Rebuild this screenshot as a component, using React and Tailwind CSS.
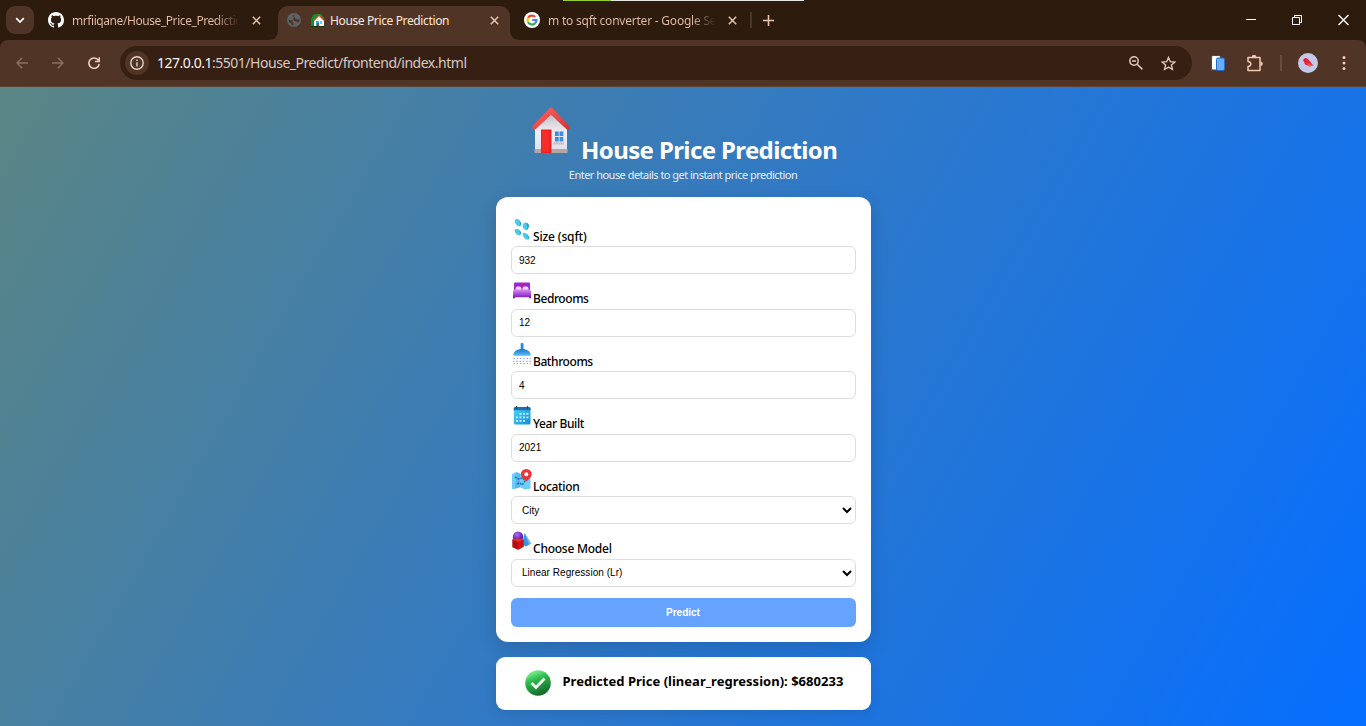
import React from "react";

const SEGOE = "font-['Noto_Sans','Open_Sans',sans-serif]";

function Close() {
  return (
    <svg className="h-[9px] w-[9px] shrink-0" viewBox="0 0 9 9" fill="none" stroke="#e9c3ae" strokeWidth="1.5">
      <path d="M.8.8l7.4 7.4M8.2.8L.8 8.2" />
    </svg>
  );
}

function TabStrip() {
  return (
    <div className="flex h-[40px] items-start bg-[#2d1b0e]">
      <div className="ml-[6px] mt-[6px] flex h-7 w-7 items-center justify-center rounded-[9px] bg-[#503526]">
        <svg className="h-3 w-3" viewBox="0 0 12 12" fill="none" stroke="#fff" strokeWidth="1.7"><path d="M2.2 4.2L6 8l3.8-3.8" /></svg>
      </div>
      <div className="flex h-10 w-[234px] items-center pl-[14px]">
        <svg className="h-4 w-4 shrink-0" viewBox="0 0 16 16" fill="#fff">
          <path d="M8 0C3.58 0 0 3.58 0 8c0 3.54 2.29 6.53 5.47 7.59.4.07.55-.17.55-.38 0-.19-.01-.82-.01-1.49-2.01.37-2.53-.49-2.69-.94-.09-.23-.48-.94-.82-1.13-.28-.15-.68-.52-.01-.53.63-.01 1.08.58 1.23.82.72 1.21 1.87.87 2.33.66.07-.52.28-.87.51-1.07-1.78-.2-3.64-.89-3.64-3.95 0-.87.31-1.59.82-2.15-.08-.2-.36-1.02.08-2.12 0 0 .67-.21 2.2.82.64-.18 1.32-.27 2-.27s1.36.09 2 .27c1.53-1.04 2.2-.82 2.2-.82.44 1.1.16 1.92.08 2.12.51.56.82 1.27.82 2.15 0 3.07-1.87 3.75-3.65 3.95.29.25.54.73.54 1.48 0 1.07-.01 1.93-.01 2.2 0 .21.15.46.55.38A8.01 8.01 0 0 0 16 8c0-4.42-3.58-8-8-8z" />
        </svg>
        <div className="ml-2 mt-px w-[168px] whitespace-nowrap bg-linear-to-r from-[#e5bfaa] from-85% to-transparent bg-clip-text text-[12px] tracking-[-0.43px] text-transparent">mrfiiqane/House_Price_Predictio</div>
        <div className="ml-[12px]"><Close /></div>
      </div>
      <svg className="h-[34px] w-[10px] shrink-0 self-end" viewBox="0 0 10 34" fill="#503526"><path d="M10 24v10H0Q10 34 10 24z" /></svg>
      <div className="mt-[6px] flex h-[34px] w-[232px] items-center rounded-t-[10px] bg-[#503526] pb-[6px] pl-[9px]">
        <svg className="h-[14px] w-[14px] shrink-0" viewBox="0 0 14 14"><circle cx="7" cy="7" r="7" fill="#5f6368" /><path d="M7.800 1.600Q5.300 2 5.800 3.800L8 4.200l.3 1.600 2.400.7 1.700-.9q.4 2.500-.9 4.200L9.800 8.600 8 8.400 6.700 7H2.500L1.600 5.800q-.4 2.600 1 4.300l1.600.2.400 1.500 2 .9.100-2.500L5.200 8.700z" fill="#503526" /></svg>
        <svg className="ml-[10px] h-[14px] w-[14px] shrink-0" viewBox="0 0 14 14"><path d="M0 13V6l2-4 3-1h5l3 4v8z" fill="#07952b" /><path d="M3 13V7l5-5 5 5v6z" fill="#f7f5ef" /><path d="M2.7 7.5L8 2l5.500 5.500" fill="none" stroke="#cd4526" strokeWidth="1.500" /><path d="M5 8h3v5H5z" fill="#23b7df" /><path d="M9 8h2v3H9z" fill="#49d6ff" /><path d="M6 10h2v3H6z" fill="#db2119" /><path d="M0 13h14v1H0z" fill="#183413" /></svg>
        <div className="ml-[5px] mt-px w-[154px] whitespace-nowrap text-[12px] tracking-[-0.37px] text-[#fbe7dd]">House Price Prediction</div>
        <div className="ml-[6px]"><Close /></div>
      </div>
      <svg className="h-[34px] w-[10px] shrink-0 self-end" viewBox="0 0 10 34" fill="#503526"><path d="M0 24Q0 34 10 34H0z" /></svg>
      <div className="flex h-10 items-center pl-[4px]">
        <svg className="h-4 w-4 shrink-0" viewBox="0 0 16 16" fill="none" strokeWidth="2.200"><circle cx="8" cy="8" r="8" fill="#fff" /><path d="M4.100 5.800A4.500 4.500 0 0 1 11.200 4.900" stroke="#ea4335" /><path d="M4.100 5.800a4.500 4.500 0 0 0 0 4.400" stroke="#fbbc04" /><path d="M4.100 10.200a4.500 4.500 0 0 0 6.900 1.200" stroke="#34a853" /><path d="M8.200 8h4.300a4.500 4.500 0 0 1-1.500 3.400" stroke="#4285f4" /></svg>
        <div className="ml-2 mt-px w-[168px] whitespace-nowrap bg-linear-to-r from-[#e5bfaa] from-85% to-transparent bg-clip-text text-[12px] tracking-[-0.22px] text-transparent">m to sqft converter - Google Se</div>
        <div className="ml-[12px]"><Close /></div>
        <div className="ml-[13px] h-4 w-[2px] bg-[#503526]" />
        <svg className="ml-[11px] h-[11px] w-[11px]" viewBox="0 0 11 11" stroke="#e9c3ae" strokeWidth="1.600"><path d="M5.500 0v11M0 5.500h11" /></svg>
      </div>
      <svg className="ml-auto mr-[17px] mt-[14px] h-3 w-[104px]" viewBox="0 0 104 12" fill="none" stroke="#fff"><path d="M1 5.500h10M47.500 3.500h7v7h-7zM49.500 3V1.500h7v7H55" /><path d="M93.500 1l10 10M103.500 1l-10 10" strokeWidth="1.300" /></svg>
    </div>
  );
}

function Toolbar() {
  return (
    <div className="bg-[#2d1b0e]">
      <div className="flex h-[47px] items-center rounded-t-[8px] border-b border-[#5c4437] bg-[#503526]">
        <svg className="ml-[16px] h-3 w-12 shrink-0" viewBox="0 0 48 12" fill="none" stroke="#8c6d5d" strokeWidth="1.500"><path d="M12 6H1M6.200.7L1 6l5.200 5.300M36 6h11M41.800.7L47 6l-5.200 5.300" /></svg>
        <svg className="ml-[24px] h-3 w-3 shrink-0" viewBox="0 0 12 12" fill="none" stroke="#f0cbb7" strokeWidth="1.600"><path d="M10.400 3.300A5.200 5.200 0 1 0 11.200 7M11.300.2v4.300H7" /></svg>
        <div className="ml-[20px] flex h-[34px] w-[1072px] items-center rounded-full bg-[#362014] pl-[5px]">
          <div className="flex h-6 w-6 shrink-0 items-center justify-center rounded-full bg-[#503526]">
            <svg className="h-[14px] w-[14px]" viewBox="0 0 14 14" fill="none" stroke="#e6d3ca" strokeWidth="1.400"><circle cx="7" cy="7" r="6.200" /><path d="M7 6.200v4.300M7 3.400v1.500" /></svg>
          </div>
          <div className="mb-px ml-2 whitespace-nowrap text-[14px] tracking-[-0.48px] text-[#d8c8c0]"><span className="text-[#fff4ee]">127.0.0.1</span>:5501/House_Predict/frontend/index.html</div>
          <svg className="ml-auto h-[14px] w-[14px]" viewBox="0 0 14 14" fill="none" stroke="#dcc8be" strokeWidth="1.500"><circle cx="5" cy="5" r="4.200" /><path d="M8.200 8.200l5.200 5.200M3 5h4" /></svg>
          <svg className="ml-[18px] mr-[16px] h-[15px] w-[15px]" viewBox="0 0 15 15" fill="none" stroke="#dcc8be" strokeWidth="1.300"><path d="M7.500 1.400l1.800 4.200 4.600.4-3.500 3 1.100 4.500-4-2.400-4 2.400L4.600 9 1.100 6l4.600-.4z" /></svg>
        </div>
        <svg className="ml-[19px] h-4 w-[14px]" viewBox="0 0 14 16"><rect x=".5" y=".5" width="9" height="14.500" rx="1.500" fill="#fff" stroke="#2e4e75" /><rect x="5.500" y="3" width="8" height="12.500" rx="1.500" fill="#68adfd" stroke="#266cc0" /></svg>
        <svg className="ml-[21px] h-[17px] w-[17px]" viewBox="0 0 17 17" fill="none" stroke="#efc8b4" strokeWidth="1.500" strokeLinejoin="round"><path d="M2 2.500h12v13H2v-3.900q2.800-.3 2.800-2.600T2 6.400z" /><path d="M6.500 2a1.500 1.500 0 0 1 3 0M14.500 7.300a1.500 1.500 0 0 1 0 3" fill="#efc8b4" /></svg>
        <div className="ml-[17px] h-4 w-[2px] bg-[#6b4c3c]" />
        <svg className="ml-[16px] h-5 w-5" viewBox="0 0 20 20"><circle cx="10" cy="10" r="10" fill="#c4c9e8" /><path d="M5 7l2-2 2 .2 3 3 2.300 3.200 1.700.8-3 .4-1.200 1.200-1.300-1.100-3.200-1L6 9z" fill="#df2639" /><path d="M9 9.500l4.300 2.300 2.500.8-2.800.3-2 1z" fill="#fa5b3e" /></svg>
        <svg className="ml-[24px] h-4 w-1" viewBox="0 0 4 16" fill="#f0cbb7"><circle cx="2" cy="2.500" r="1.500" /><circle cx="2" cy="8" r="1.500" /><circle cx="2" cy="13.500" r="1.500" /></svg>
      </div>
    </div>
  );
}

const steps = (
  <svg className="h-[22px] w-[22px]" viewBox="0 0 22 22" fill="#4ac9ed">
    <path d="M3.600 2.500Q5.300.2 7.800 1.600l2.400 3.600-1 3.400-2.800-.5Q3.600 5.500 3.600 2.500z" />
    <path d="M11.600 8.500q.2-4 3.400-3.900 3.200.7 2.900 4.400l-2.100 3.200-3-.9zM3.600 12q2-2.400 4.400-.5l2.200 3-1.300 3-2.700-.6Q3.600 14.800 3.600 12zM11.500 15.500q1.900-1.800 4.200.3l2.500 3.100-1.100 2.900-2.800-.6q-2.500-2.500-2.800-5.700z" />
    <path d="M15.500 4.900q2.700.9 2.400 4.100l-2.100 3.200q1.200-3.700-.3-7.300zM15.700 15.800l2.500 3.100-1.100 2.900q-.1-3.200-1.400-6zM8.200 2l2 3.200-1 3.400q.2-3.500-1-6.600zM8.200 11.700l2 2.800-1.300 3q.3-3-.7-5.800z" fill="#269bbf" />
  </svg>
);

const bed = (
  <svg className="h-[22px] w-[22px]" viewBox="0 0 22 22">
    <defs><linearGradient id="bedg" x1="0" y1="0" x2="0" y2="1"><stop stopColor="#db8cf5" /><stop offset="1" stopColor="#7912bb" /></linearGradient></defs>
    <path d="M3 3.500q0-1 1-1h14q1 0 1 1V12H3z" fill="#9b27cf" /><path d="M9.500 4l1.500-.8L12.500 4 11 5.600z" fill="#d91c5b" />
    <rect x="4.500" y="6.500" width="6" height="4.500" rx="2" fill="#f0d8fb" /><rect x="11.500" y="6.500" width="6" height="4.500" rx="2" fill="#f0d8fb" />
    <path d="M2 11q1-2 3-1.500h12q2-.5 3 1.500v7.200h-2V17.300H4v.9H2z" fill="url(#bedg)" />
  </svg>
);

const shower = (
  <svg className="h-[22px] w-[22px]" viewBox="0 0 22 22">
    <defs><linearGradient id="shg" x1="0" y1="0" x2="0" y2="1"><stop stopColor="#1571c5" /><stop offset="1" stopColor="#5bc0f8" /></linearGradient></defs>
    <rect x="9.700" y="0" width="2.800" height="6.500" rx="1" fill="#1e8edb" /><path d="M2.300 11.500q1-4.500 6-5.300l2.700-.7 2.700.7q5 .8 6 5.300 0 1.300-1 1.300H3.300q-1 0-1-1.300z" fill="url(#shg)" />
    <path d="M2.500 15.500h17.500M2 18.300h18M2.500 20.500h17" stroke="#86a0dc" strokeWidth="1.200" strokeDasharray="1.300 2" />
  </svg>
);

const calendar = (
  <svg className="h-[22px] w-[22px]" viewBox="0 0 22 22">
    <defs><linearGradient id="calg" x1="0" y1="0" x2="1" y2="1"><stop stopColor="#48dcfd" /><stop offset="1" stopColor="#1688d3" /></linearGradient></defs>
    <rect x="2.800" y="2" width="16.700" height="17.500" rx="1.500" fill="url(#calg)" /><path d="M2.800 5.300V3.500Q2.800 2 4.300 2H18q1.500 0 1.500 1.500v1.800z" fill="#1b6ead" /><path d="M5.500 1v3M16.500 1v3" stroke="#145486" strokeWidth="1.300" />
    <path d="M8.500 8.800h9M5 12.300h12.500M5 15.800h9" stroke="#c9f3fc" strokeWidth="1.800" strokeDasharray="2 1.500" />
  </svg>
);

const map = (
  <svg className="h-[22px] w-[22px]" viewBox="0 0 22 22">
    <path d="M1 6l4.500-2L11 6.500l8.500-2v16L14 21.500l-5-2.200-7 2q-1 0-1-1z" fill="#71cdf8" /><path d="M5.500 4L9 6v13.300l-5.500 1.500L5 12z" fill="#48a9e6" opacity=".6" /><path d="M4 9l3 2 5-1 2 3-3 4-2-2-4 1" fill="none" stroke="#2474bb" strokeWidth="1.600" strokeDasharray="2 1" />
    <path d="M15.500 13.500Q9.800 9 9.800 6.300a5.500 5.300 0 0 1 11 0Q20.800 9 15.500 13.500z" fill="#ee3439" /><circle cx="15.300" cy="6.300" r="2" fill="#fff" />
  </svg>
);

const model = (
  <svg className="h-[22px] w-[22px]" viewBox="0 0 22 22">
    <defs><radialGradient id="sph" cx=".4" cy=".3"><stop stopColor="#b06cf5" /><stop offset="1" stopColor="#6422b8" /></radialGradient></defs>
    <path d="M13.500 3L20 13.500l-5 3-4-2z" fill="#3399df" /><path d="M13.500 3L20 13.500l-2 1z" fill="#64bdea" /><circle cx="7" cy="6.700" r="5.200" fill="url(#sph)" />
    <path d="M1.300 9.500L7 8.300l5.500 1.400v7L7 19.700 1.300 17.200z" fill="#b40c13" /><path d="M1.300 9.500L7 8.300l5.500 1.400L7 12z" fill="#e6312a" /><path d="M7 12l5.500-2.300v7L7 19.700z" fill="#cf1218" />
  </svg>
);

const fields = [
  { icon: steps, label: "Size (sqft)", value: "932", spacing: "tracking-[-0.15px]" },
  { icon: bed, label: "Bedrooms", value: "12", spacing: "tracking-[-0.42px]" },
  { icon: shower, label: "Bathrooms", value: "4", spacing: "tracking-[-0.42px]" },
  { icon: calendar, label: "Year Built", value: "2021", spacing: "tracking-[-0.38px]" },
  { icon: map, label: "Location", value: "City", select: true, spacing: "tracking-[-0.35px]" },
  { icon: model, label: "Choose Model", value: "Linear Regression (Lr)", select: true, spacing: "tracking-[-0.24px]" },
];

function Field({ icon, label, value, select, spacing }) {
  return (
    <div className="h-[62.5px]">
      <div className="flex h-[34px] items-start pt-[5.8px]">
        {icon}
        <span className={`ml-[0.5px] mt-[11px] whitespace-nowrap text-[12px] font-medium leading-[16px] text-black ${spacing}`}>{label}</span>
      </div>
      <div className={`flex h-7 items-center rounded-[6px] border border-[#dcdcdc] bg-white pr-[3px] font-['Liberation_Sans',Arial,sans-serif] text-[10px] tracking-[0.05px] text-black ${select ? "pl-[10.4px]" : "pl-[7.400px]"}`}>
        {value}
        {select && <svg className="ml-auto h-[10px] w-[10px]" viewBox="0 0 10 10" fill="none" stroke="#000" strokeWidth="2"><path d="M1 3l4 4 4-4" /></svg>}
      </div>
    </div>
  );
}

export default function App() {
  return (
    <div className={`h-[726px] w-[1366px] overflow-hidden ${SEGOE}`}>
      <TabStrip />
      <div className="absolute left-[563px] top-0 flex h-px w-[241px] bg-[#e5e5e5]"><div className="w-12 bg-[#9acd32]" /></div>
      <Toolbar />
      <main className="flex h-[639px] flex-col items-center bg-[linear-gradient(120deg,#5a8583_0%,#3079c6_50%,#056eff_100%)]">
        <header className="flex h-[110px] w-[375px] flex-col items-center pt-[19px]">
          <div className="flex h-[60px] w-[307px] items-start">
            <svg className="h-[50px] w-[42px] shrink-0" viewBox="0 0 42 50">
              <defs><linearGradient id="roof" x1="0" y1="0" x2="1" y2="1"><stop stopColor="#ff6661" /><stop offset="1" stopColor="#d92f30" /></linearGradient><linearGradient id="wall" x1="0" y1="0" x2="0" y2="1"><stop stopColor="#b9b5bc" /><stop offset=".5" stopColor="#f1eef4" /><stop offset="1" stopColor="#dedde5" /></linearGradient></defs>
              <path d="M5 21L21 5l16 16v26H5z" fill="url(#wall)" /><path d="M4.500 43h33v4h-33z" fill="#b4a6a6" /><path d="M11 23.500h10.500V47H11z" fill="#ee2020" /><path d="M12 25h7v21h-7z" fill="#ff3931" opacity=".5" />
              <path d="M24 24h10v13H24z" fill="#e4e5ee" /><path d="M25 25.500h3.700V30H25zM29.600 25.500h3.700V30h-3.700zM25 31h3.700v4.500H25zM29.600 31h3.700v4.500h-3.700z" fill="#3b8dde" /><path d="M23.500 36.500h10.500v2H23.500z" fill="#c9bfc7" />
              <path d="M21 1.400q.8 0 1.300.6L39.500 20v3.300q-1.500 1.500-3 0L21 8.700 5.500 23.300q-1.500 1.500-3 0V20L19.700 2Q20.200 1.400 21 1.400z" fill="url(#roof)" />
            </svg>
            <h1 className="ml-[9.6px] mt-[27px] whitespace-nowrap text-[24px] font-bold leading-[34px] tracking-[-0.62px] text-white">House Price Prediction</h1>
          </div>
          <p className="whitespace-nowrap text-[11px] leading-[18px] tracking-[-0.52px] text-[#e6eef6]">Enter house details to get instant price prediction</p>
        </header>
        <section className="h-[445px] w-[375px] rounded-[12px] bg-white px-[15px] pt-[15px] shadow-[0_6px_18px_rgba(0,0,0,0.15)]">
          {fields.map((f) => <Field key={f.label} {...f} />)}
          <button className="mt-[11px] flex h-[29px] w-full items-center justify-center rounded-[6px] bg-[#66a3ff] font-['Liberation_Sans',Arial,sans-serif] text-[10px] font-bold text-white">Predict</button>
        </section>
        <section className="mt-[15px] flex h-[53px] w-[375px] items-center rounded-[9px] bg-white pl-[29px] shadow-[0_4px_12px_rgba(0,0,0,0.1)]">
          <svg className="mb-px h-[26px] w-[26px] shrink-0" viewBox="0 0 26 26"><defs><linearGradient id="ok" x1=".3" y1="0" x2=".7" y2="1"><stop stopColor="#8bf59a" /><stop offset=".35" stopColor="#2abb4c" /><stop offset="1" stopColor="#145f28" /></linearGradient></defs><circle cx="13" cy="13" r="12.800" fill="url(#ok)" /><path d="M6.500 13l4.500 4.500 8.500-9" fill="none" stroke="#f2f5f2" strokeWidth="2.800" /></svg>
          <div className="mb-1 ml-[12px] whitespace-nowrap text-[13px] font-bold tracking-[0.02px] text-black">Predicted Price (linear_regression): $680233</div>
        </section>
      </main>
    </div>
  );
}
